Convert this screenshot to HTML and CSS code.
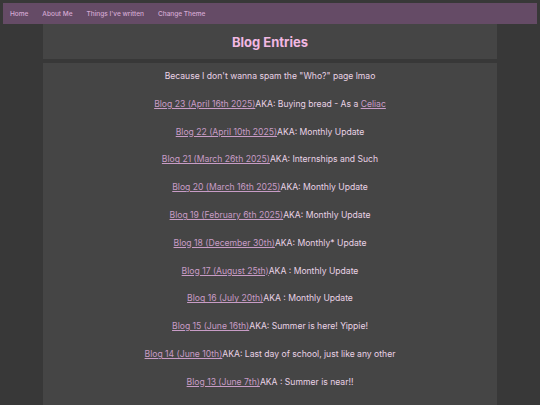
FILE: index.html
```html
<!DOCTYPE html>
<html lang="en">
<head>
  <meta charset="UTF-8" />
  <title>Blog Entries</title>
  <meta name="viewport" content="width=device-width, initial-scale=1.0" />
  <link rel="stylesheet" href="styles.css">
</head>
<body>

  <nav class="topnav">
    <a href="#">Home</a>
    <a href="#">About Me</a>
    <a href="#">Things I've written</a>
    <a href="#">Change Theme</a>
  </nav>

  <div class="page">
    <header class="page-head">
      <h1>Blog Entries</h1>
    </header>

    <section class="entries">
      <p>Because I don't wanna spam the "Who?" page lmao</p>
      <p><a href="#">Blog 23 (April 16th 2025)</a>AKA: Buying bread - As a <a href="#">Celiac</a></p>
      <p><a href="#">Blog 22 (April 10th 2025)</a>AKA: Monthly Update</p>
      <p><a href="#">Blog 21 (March 26th 2025)</a>AKA: Internships and Such</p>
      <p><a href="#">Blog 20 (March 16th 2025)</a>AKA: Monthly Update</p>
      <p><a href="#">Blog 19 (February 6th 2025)</a>AKA: Monthly Update</p>
      <p><a href="#">Blog 18 (December 30th)</a>AKA: Monthly* Update</p>
      <p><a href="#">Blog 17 (August 25th)</a>AKA : Monthly Update</p>
      <p><a href="#">Blog 16 (July 20th)</a>AKA : Monthly Update</p>
      <p><a href="#">Blog 15 (June 16th)</a>AKA: Summer is here! Yippie!</p>
      <p><a href="#">Blog 14 (June 10th)</a>AKA: Last day of school, just like any other</p>
      <p><a href="#">Blog 13 (June 7th)</a>AKA : Summer is near!!</p>
    </section>
  </div>

</body>
</html>
```

FILE: styles.css
```css
* {
  box-sizing: border-box;
  margin: 0;
  padding: 0;
}

body {
  background: #383838;
  color: #e9d3e6;
  font-family: Inter, 'Noto Sans', sans-serif;
  padding: 3px 3px 0;
  height: 100vh;
  overflow: hidden;
}

/* top bar */
.topnav {
  display: flex;
  align-items: center;
  gap: 14px;
  height: 21px;
  padding-left: 7px;
  background: #654b66;
}
.topnav a {
  color: #d4a9d2;
  text-decoration: none;
  font-size: 6.5px;
  font-weight: 500;
}

.page {
  width: 454px;
  margin: 0 auto;
}

.page-head {
  background: #454545;
  height: 35px;
  padding-top: 1px;
  display: flex;
  align-items: center;
  justify-content: center;
}
.page-head h1 {
  color: #f2b8e2;
  font-size: 13px;
  font-weight: 700;
}

.entries {
  background: #454545;
  margin-top: 4px;
  padding-top: 8px;
  text-align: center;
  font-size: 8.6px;
  height: calc(100vh - 63px);
  overflow: hidden;
}
.entries p {
  line-height: 11px;
  margin-bottom: 16.8px;
}
.entries a {
  color: #c89cc6;
}
```
